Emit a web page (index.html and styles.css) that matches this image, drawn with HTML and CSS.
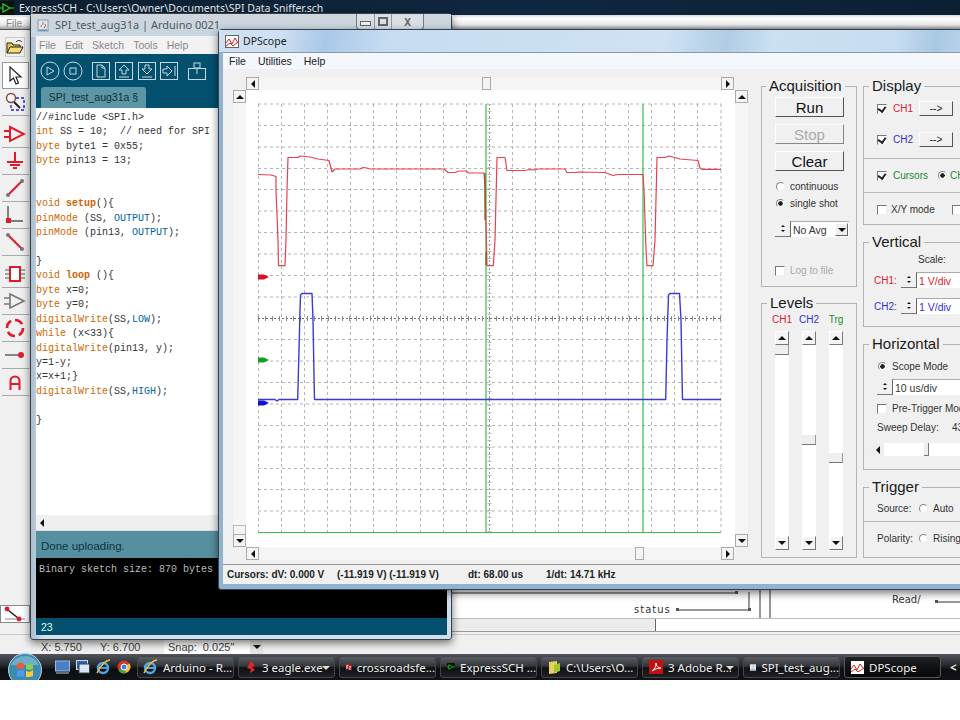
FILE: index.html
```html
<!DOCTYPE html>
<html>
<head>
    <meta charset="utf-8">
    <title>DPScope - SPI Data Sniffer</title>
    <link rel="stylesheet" href="styles.css">
</head>
<body>
<div class="screen">

    <!-- ExpressSCH, behind everything -->
    <div class="sch">
        <div class="sch-title">
            <svg class="sch-logo" width="14" height="14" viewBox="0 0 14 14"><rect width="14" height="14" fill="#0a1408"/><path d="M3 3l7 4-7 4zM0 7h3M10 7h4" fill="none" stroke="#2fd03a" stroke-width="1.2"/></svg>
            <span>ExpressSCH - C:\Users\Owner\Documents\SPI Data Sniffer.sch</span>
        </div>
        <div class="sch-menu"><span>File</span></div>
        <div class="sch-main">
            <div class="sch-tools">
                <div class="open-btn">
                    <svg width="18" height="16" viewBox="0 0 18 16"><path d="M1 14V4h5l1 2h7v2" fill="#e8c84a" stroke="#222"/><path d="M1 14l3-6h13l-3 6z" fill="#f3dc76" stroke="#222"/><path d="M10 3c2-2 4-2 6 0" fill="none" stroke="#222"/></svg>
                </div>
                <div class="tool tool-on">
                    <svg width="18" height="20" viewBox="0 0 18 20"><path d="M4 1v14l3.5-3 2.5 6 2.5-1-2.5-6H15z" fill="#fff" stroke="#222" stroke-width="1.2"/></svg>
                </div>
                <div class="tool tool-gap">
                    <svg width="22" height="20" viewBox="0 0 22 20"><rect x="7" y="6" width="13" height="12" fill="none" stroke="#2222cc" stroke-dasharray="3 2" stroke-width="1.4"/><circle cx="7" cy="6" r="4.5" fill="#f5f5f5" stroke="#884444" stroke-width="1.4"/><path d="M10 10l6 6" stroke="#222" stroke-width="2"/></svg>
                </div>
                <div class="tool">
                    <svg width="22" height="18" viewBox="0 0 22 18"><path d="M6 2l14 7-14 7zM0 6h6M0 12h6" fill="none" stroke="#e01a2a" stroke-width="2"/></svg>
                </div>
                <div class="tool">
                    <svg width="18" height="18" viewBox="0 0 18 18"><path d="M9 0v10M1 10h16M4 13h10M7 16h4" fill="none" stroke="#e01a2a" stroke-width="2"/></svg>
                </div>
                <div class="tool">
                    <svg width="20" height="20" viewBox="0 0 20 20"><path d="M3 17L17 3" stroke="#e01a2a" stroke-width="2"/><circle cx="17" cy="3" r="2" fill="#777"/><circle cx="3" cy="17" r="2" fill="#777"/></svg>
                </div>
                <div class="tool">
                    <svg width="20" height="20" viewBox="0 0 20 20"><path d="M3 1v15h15" fill="none" stroke="#555" stroke-width="1.4"/><rect x="1" y="13" width="5" height="5" fill="#e01a2a"/></svg>
                </div>
                <div class="tool tool-gap">
                    <svg width="20" height="20" viewBox="0 0 20 20"><path d="M3 3l14 14" stroke="#e01a2a" stroke-width="2"/><circle cx="3" cy="3" r="2" fill="#777"/><circle cx="17" cy="17" r="2" fill="#777"/></svg>
                </div>
                <div class="tool">
                    <svg width="22" height="20" viewBox="0 0 22 20"><rect x="6" y="3" width="10" height="14" fill="#fff" stroke="#e01a2a" stroke-width="2"/><path d="M1 6h5M1 10h5M1 14h5M16 6h5M16 10h5M16 14h5" stroke="#555"/></svg>
                </div>
                <div class="tool">
                    <svg width="22" height="18" viewBox="0 0 22 18"><path d="M6 2l14 7-14 7zM0 6h6M0 12h6" fill="none" stroke="#777" stroke-width="1.6"/></svg>
                </div>
                <div class="tool">
                    <svg width="20" height="20" viewBox="0 0 20 20"><circle cx="10" cy="10" r="8" fill="none" stroke="#e01a2a" stroke-width="2.6" stroke-dasharray="8.5 4"/></svg>
                </div>
                <div class="tool">
                    <svg width="22" height="10" viewBox="0 0 22 10"><path d="M1 5h14" stroke="#555" stroke-width="1.4"/><circle cx="17" cy="5" r="3" fill="#e01a2a"/></svg>
                </div>
                <div class="tool">
                    <svg width="12" height="15" viewBox="0 0 12 15"><path d="M1.5 15V6a4.5 4.5 0 0 1 9 0v9M1.5 9h9" fill="none" stroke="#e01a2a" stroke-width="2"/></svg>
                </div>
                <div class="tools-fill"></div>
                <div class="tool-last">
                    <svg width="26" height="16" viewBox="0 0 26 16"><path d="M3 13h20" stroke="#888"/><path d="M6 4l10 8" stroke="#222" stroke-width="1.6"/><circle cx="5" cy="3" r="2.4" fill="#e01a2a"/><circle cx="17" cy="13" r="2.4" fill="#e01a2a"/></svg>
                </div>
            </div>
            <div class="sch-canvas">
                <div class="sheet">
                    <svg class="sheet-lines" width="930" height="589" viewBox="30 30 930 589">
                        <path d="M452 593H736M678 610H749V592M760 590V618M770 590V618M936 602H960" fill="none" stroke="#333"/>
                        <rect x="676" y="608" width="3" height="3" fill="#555"/>
                        <rect x="748" y="608" width="3" height="3" fill="#555"/>
                        <rect x="735" y="591" width="3" height="3" fill="#555"/>
                        <rect x="935" y="600" width="3" height="3" fill="#555"/>
                    </svg>
                    <span class="net net-status">status</span>
                    <span class="net net-read">Read/</span>
                </div>
                <div class="sheet-scroll"><div class="sheet-thumb"></div></div>
                <div class="sheet-gap"></div>
            </div>
        </div>
        <div class="sch-status">
            <span class="coord">X: 5.750</span>
            <span class="coord">Y: 6.700</span>
            <div class="snap">Snap:&nbsp; 0.025"<span class="snap-drop"><i class="arr arr-down"></i></span></div>
        </div>
    </div>

    <!-- Arduino IDE -->
    <div class="win ard">
        <div class="ard-title">
            <svg width="12" height="13" viewBox="0 0 12 13"><rect x="1" y="1" width="10" height="11" fill="#dfe8f2" stroke="#8899aa"/><path d="M4 8c0-3 3-2 2-5M7 9c1-2 2-2 1-4" fill="none" stroke="#c8541e"/><path d="M2 11h8" stroke="#3a6ea5"/></svg>
            <span class="ard-name">SPI_test_aug31a | Arduino 0021</span>
            <div class="win-btns">
                <span class="wb wb-min"><i></i></span>
                <span class="wb wb-max"><i></i></span>
                <span class="wb wb-close">X</span>
            </div>
        </div>
        <div class="ard-menu">
            <span>File</span><span>Edit</span><span>Sketch</span><span>Tools</span><span>Help</span>
        </div>
        <div class="ard-head">
            <div class="ard-icons">
                <svg width="20" height="20" viewBox="0 0 20 20"><circle cx="10" cy="10" r="9" class="ico"/><path d="M7 6l7 4-7 4z" class="ico"/></svg>
                <svg class="ico-second" width="20" height="20" viewBox="0 0 20 20"><circle cx="10" cy="10" r="9" class="ico"/><rect x="7" y="7" width="6" height="6" class="ico"/></svg>
                <svg class="ico-first" width="18" height="18" viewBox="0 0 18 18"><rect x="0.5" y="0.5" width="17" height="17" class="ico"/><path d="M5 3h5l3 3v9H5zM10 3v3h3" class="ico"/></svg>
                <svg width="18" height="18" viewBox="0 0 18 18"><rect x="0.5" y="0.5" width="17" height="17" class="ico"/><path d="M9 3l5 5h-3v4H7V8H4zM4 15h10" class="ico"/></svg>
                <svg width="18" height="18" viewBox="0 0 18 18"><rect x="0.5" y="0.5" width="17" height="17" class="ico"/><path d="M9 12l5-5h-3V3H7v4H4zM4 15h10" class="ico"/></svg>
                <svg class="ico-tight" width="18" height="18" viewBox="0 0 18 18"><rect x="0.5" y="0.5" width="17" height="17" class="ico"/><path d="M12 9L7 4v3H3v4h4v3zM15 4v10" class="ico"/></svg>
                <svg class="ico-last" width="18" height="18" viewBox="0 0 18 18"><rect x="0.5" y="6.5" width="17" height="11" class="ico"/><rect x="6" y="1" width="6" height="5" class="ico"/><path d="M9 6v6" class="ico"/></svg>
            </div>
            <div class="ard-tab">SPI_test_aug31a §</div>
        </div>
<pre class="code">//#include &lt;SPI.h&gt;
<b>int</b> SS = 10;  // need for SPI
<b>byte</b> byte1 = 0x55;
<b>byte</b> pin13 = 13;


<b>void</b> <strong>setup</strong>(){
<b>pinMode</b> (SS, <em>OUTPUT</em>);
<b>pinMode</b> (pin13, <em>OUTPUT</em>);

}
<b>void</b> <strong>loop</strong> (){
<b>byte</b> x=0;
<b>byte</b> y=0;
<b>digitalWrite</b>(SS,<em>LOW</em>);
<b>while</b> (x&lt;33){
<b>digitalWrite</b>(pin13, y);
y=1-y;
x=x+1;}
<b>digitalWrite</b>(SS,<em>HIGH</em>);

}</pre>
        <div class="ard-scroll"><span class="ard-left"><i class="arr arr-left"></i></span></div>
        <div class="ard-status">Done uploading.</div>
        <pre class="ard-console">Binary sketch size: 870 bytes</pre>
        <div class="ard-foot">23</div>
    </div>

    <!-- DPScope -->
    <div class="win dps">
        <div class="dps-title">
            <svg width="14" height="13" viewBox="0 0 14 13"><rect x="0.5" y="0.5" width="13" height="12" fill="#fff" stroke="#666"/><path d="M1 8l3-4 3 5 3-6 3 5M1 11l4-3 3 3 5-4" fill="none" stroke="#c22"/></svg>
            <span>DPScope</span>
        </div>
        <div class="dps-menu"><span>File</span><span>Utilities</span><span>Help</span></div>
        <div class="dps-client">
            <div class="view">
                <div class="corner"></div>
                <div class="hbar">
                    <span class="sb"><i class="arr arr-left"></i></span>
                    <span class="h-thumb h-thumb-top"></span>
                    <span class="sb sb-end"><i class="arr arr-right"></i></span>
                </div>
                <div class="corner"></div>

                <div class="vbar">
                    <span class="sb"><i class="arr arr-up"></i></span>
                    <span class="v-thumb"></span>
                    <span class="sb"><i class="arr arr-down"></i></span>
                </div>
                <svg class="plot" width="489" height="457" viewBox="246 90 489 457">
                    <!-- grid -->
                    <path class="grid" d="M258 104H721M258 125.5H721M258 147H721M258 168.5H721M258 189.5H721M258 211H721M258 232.5H721M258 254H721M258 275.5H721M258 297H721M258 339.5H721M258 361H721M258 382.5H721M258 404H721M258 425.5H721M258 447H721M258 468.5H721M258 489.5H721M258 511H721"/>
                    <path class="grid" d="M258.5 104V532M281.5 104V532M304.5 104V532M327.5 104V532M350.5 104V532M373.5 104V532M396.5 104V532M420.5 104V532M443.5 104V532M466.5 104V532M512.5 104V532M535.5 104V532M558.5 104V532M582.5 104V532M605.5 104V532M628.5 104V532M651.5 104V532M674.5 104V532M697.5 104V532M721 104V532"/>
                    <path class="axis" d="M258 318.5H721"/>
                    <path class="axis-v" d="M489.5 104V532"/>
                    <path class="ticks" d="M258 318.5H721"/>
                    <path class="ticks-v" d="M489.5 104V532"/>
                    <!-- cursors and baseline -->
                    <path class="cursor" d="M486 104V532M643 104V532M258 532.5H721"/>
                    <!-- traces -->
                    <polyline class="tr-red" points="258,174.5 271,175 276,176.5 276,190 278,240 278.5,265.7 285,265.7 286,240 287,190 288,157.5 298,157.5 300,156 310,157 318,159 329,160.5 331,168 332,172 335,169 360,169 363,167.5 367,168 370,169 444,169 448,172.5 455,172.5 459,171 466,171 469,173 484,173 485,186 487,265.7 493.3,265.7 495,240 497,157.5 505,157.5 507,170.5 524,170.5 530,169.5 534,170 538,169 565,169 567,172.5 576,172.5 578,172 605,172.5 613,175.5 618,174.5 643,174.5 644,190 646,250 647,265.7 653,265.7 655,240 657,157.5 665,157.5 669,156 680,159 698,160.5 700,168 702,169.3 721,169.3"/>
                    <path class="tr-brown" d="M485 173V220M486 252V265"/>
                    <polyline class="tr-blue" points="258,399.5 275,399.5 277,401 279,399.5 297.7,399.5 299,350 300,310 300.5,295 302,293.5 312,293.5 313,320 314,375 314.5,399.5 665.7,399.5 667,340 668,310 668.5,295 670,293.5 679.5,293.5 681,320 682,375 682.5,399.5 721,399.5"/>
                    <!-- channel markers -->
                    <path d="M258 274.5h6l5 2.5-5 2.5h-6z" fill="#e01020"/>
                    <path d="M258 357.5h6l5 2.5-5 2.5h-6z" fill="#10a020"/>
                    <path d="M258 400.5h6l5 2.5-5 2.5h-6z" fill="#1010d8"/>
                </svg>
                <div class="vbar">
                    <span class="sb"><i class="arr arr-up"></i></span>
                    <span class="v-fill"></span>
                    <span class="sb"><i class="arr arr-down"></i></span>
                </div>

                <div class="corner"></div>
                <div class="hbar">
                    <span class="sb"><i class="arr arr-left"></i></span>
                    <span class="h-thumb h-thumb-bot"></span>
                    <span class="sb sb-end"><i class="arr arr-right"></i></span>
                </div>
                <div class="corner"></div>
            </div>

            <div class="col col-a">
                <fieldset class="acq">
                    <legend>Acquisition</legend>
                    <button class="big">Run</button>
                    <button class="big off">Stop</button>
                    <button class="big">Clear</button>
                    <label class="opt opt-first"><i class="radio"></i>continuous</label>
                    <label class="opt"><i class="radio on"></i>single shot</label>
                    <div class="stepper avg">
                        <span class="spin"><i class="arr arr-up"></i><i class="arr arr-down"></i></span>
                        <span class="field">No Avg<span class="drop"><i class="arr arr-down"></i></span></span>
                    </div>
                    <label class="opt off log"><i class="check"></i>Log to file</label>
                </fieldset>
                <fieldset class="levels">
                    <legend>Levels</legend>
                    <div class="lev-grid">
                        <span class="red">CH1</span><span class="blue">CH2</span><span class="green">Trg</span>
                        <div class="lev"><span class="sb"><i class="arr arr-up"></i></span><span class="lev-track"><span class="lev-thumb lt1"></span></span><span class="sb"><i class="arr arr-down"></i></span></div>
                        <div class="lev"><span class="sb"><i class="arr arr-up"></i></span><span class="lev-track"><span class="lev-thumb lt2"></span></span><span class="sb"><i class="arr arr-down"></i></span></div>
                        <div class="lev"><span class="sb"><i class="arr arr-up"></i></span><span class="lev-track"><span class="lev-thumb lt3"></span></span><span class="sb"><i class="arr arr-down"></i></span></div>
                    </div>
                </fieldset>
            </div>

            <div class="col col-b">
                <fieldset class="display">
                    <legend>Display</legend>
                    <div class="row row-ch"><i class="check on"></i><span class="red ch">CH1</span><button class="mini">--&gt;</button></div>
                    <div class="row row-ch2"><i class="check on"></i><span class="blue ch">CH2</span><button class="mini">--&gt;</button></div>
                    <hr>
                    <div class="row row-cur"><i class="check on"></i><span class="green ch cur">Cursors</span><i class="radio on"></i><span class="green">CH1</span></div>
                    <hr>
                    <div class="row row-xy"><i class="check"></i><span class="xy">X/Y mode</span><i class="check"></i></div>
                </fieldset>
                <fieldset class="vertical">
                    <legend>Vertical</legend>
                    <div class="scale">Scale:</div>
                    <div class="row row-v"><span class="red vlab">CH1:</span><div class="stepper wide"><span class="spin"><i class="arr arr-up"></i><i class="arr arr-down"></i></span><span class="field red">1 V/div</span></div></div>
                    <div class="row row-v row-v2"><span class="blue vlab">CH2:</span><div class="stepper wide"><span class="spin"><i class="arr arr-up"></i><i class="arr arr-down"></i></span><span class="field blue">1 V/div</span></div></div>
                </fieldset>
                <fieldset class="horizontal">
                    <legend>Horizontal</legend>
                    <div class="row row-sm"><i class="radio on"></i><span>Scope Mode</span></div>
                    <div class="stepper wide sweep"><span class="spin"><i class="arr arr-up"></i><i class="arr arr-down"></i></span><span class="field">10 us/div</span></div>
                    <div class="row row-pre"><i class="check"></i><span>Pre-Trigger Mode</span></div>
                    <div class="row row-delay"><span>Sweep Delay:</span><span class="delay">43</span></div>
                    <div class="h-slider"><span class="sb"><i class="arr arr-left"></i></span><span class="h-track"><span class="slide"></span></span></div>
                </fieldset>
                <fieldset class="trigger">
                    <legend>Trigger</legend>
                    <div class="row row-src"><span class="trig-lab">Source:</span><i class="radio"></i><span>Auto</span></div>
                    <hr>
                    <div class="row row-pol"><span class="trig-lab">Polarity:</span><i class="radio"></i><span>Rising</span></div>
                </fieldset>
            </div>
        </div>
        <div class="dps-status">
            <span class="st-a">Cursors: dV: 0.000 V</span>
            <span class="st-b">(-11.919 V) (-11.919 V)</span>
            <span class="st-c">dt: 68.00 us</span>
            <span class="st-d">1/dt: 14.71 kHz</span>
        </div>
    </div>

    <!-- Vista taskbar -->
    <div class="taskbar">
        <div class="orb">
            <svg width="34" height="34" viewBox="0 0 34 34">
                <circle cx="17" cy="17" r="16.5" fill="#3f8bb0" stroke="#b4d6e6"/>
                <path d="M3 12a14.5 12 0 0 1 28 0z" fill="#9fd0e6" opacity="0.5"/>
                <path d="M9 11c3-2 5-1 7 0v5c-2-1-5-1-7 0z" fill="#ef5a30"/>
                <path d="M18 11c3 1 5 1 7-1v6c-2 1-5 1-7 0z" fill="#8cd048"/>
                <path d="M9 18c3-1 5-1 7 0v6c-2-1-5-1-7 0z" fill="#4a9cf0"/>
                <path d="M18 18c3 1 5 1 7-1v6c-2 1-5 1-7 1z" fill="#f8cc38"/>
            </svg>
        </div>
        <div class="quick">
            <svg width="15" height="14" viewBox="0 0 15 14"><rect x="0.5" y="1" width="14" height="10" fill="#4a7fc8" stroke="#9db8d8"/><path d="M1 13h13" stroke="#bcd"/></svg>
            <svg width="14" height="14" viewBox="0 0 14 14"><rect x="0.5" y="0.5" width="11" height="9" fill="#2b64b0" stroke="#cde"/><rect x="3" y="4" width="10.5" height="9" fill="#d8e6f5" stroke="#345"/></svg>
            <svg width="15" height="16" viewBox="0 0 15 16"><circle cx="7" cy="9" r="5" fill="none" stroke="#4ea5e8" stroke-width="2.4"/><path d="M3 9h8" stroke="#4ea5e8" stroke-width="1.8"/><path d="M1 14C5 5 11 1 14 1" fill="none" stroke="#f0c040" stroke-width="1.4"/></svg>
            <svg width="14" height="14" viewBox="0 0 14 14"><circle cx="7" cy="7" r="6.5" fill="#d8352a"/><path d="M7 7L1.5 10.5A6.5 6.5 0 0 0 9 13z" fill="#3aa648"/><path d="M7 7l2 6A6.5 6.5 0 0 0 12.5 3.5z" fill="#f2c22e"/><circle cx="7" cy="7" r="3" fill="#3a82e0" stroke="#fff"/></svg>
        </div>
        <div class="task task-1">
            <svg width="15" height="16" viewBox="0 0 15 16"><circle cx="7" cy="9" r="5" fill="none" stroke="#4ea5e8" stroke-width="2.4"/><path d="M3 9h8" stroke="#4ea5e8" stroke-width="1.8"/><path d="M1 14C5 5 11 1 14 1" fill="none" stroke="#f0c040" stroke-width="1.4"/></svg>
            <span>Arduino - R...</span>
        </div>
        <div class="task">
            <svg width="12" height="14" viewBox="0 0 12 14"><path d="M6 1l4 5-3 1 3 3-5 3 1-4-4-1z" fill="#e02828"/></svg>
            <span>3 eagle.exe</span><i class="task-drop"></i>
        </div>
        <div class="task">
            <svg width="14" height="14" viewBox="0 0 14 14"><rect width="14" height="14" fill="#a81818"/><path d="M2 12V3h4M2 7h3" fill="none" stroke="#fff" stroke-width="1.8"/><path d="M7 6h5l-5 6h5" fill="none" stroke="#fff" stroke-width="1.6"/></svg>
            <span>crossroadsfe...</span>
        </div>
        <div class="task">
            <svg width="14" height="14" viewBox="0 0 14 14"><rect width="14" height="14" fill="#0a1408"/><path d="M3 3l7 4-7 4zM0 7h3M10 7h4" fill="none" stroke="#2fd03a" stroke-width="1.2"/></svg>
            <span>ExpressSCH ...</span>
        </div>
        <div class="task">
            <svg width="13" height="15" viewBox="0 0 13 15"><path d="M1 2l8-1v12l-8 1z" fill="#e8d060"/><path d="M6 5l6-2v8l-6 2z" fill="#9cc830"/></svg>
            <span>C:\Users\O...</span>
        </div>
        <div class="task">
            <svg width="14" height="14" viewBox="0 0 14 14"><rect width="14" height="14" fill="#c41010"/><path d="M3 11c3-2 4-5 4-8 0 3 2 5 5 5-3 0-6 1-9 3z" fill="none" stroke="#fff"/></svg>
            <span>3 Adobe R...</span><i class="task-drop"></i>
        </div>
        <div class="task">
            <svg width="13" height="13" viewBox="0 0 13 13"><rect width="13" height="13" fill="#dfe8f2"/><path d="M5 8c0-3 3-2 2-5" fill="none" stroke="#c8541e"/><path d="M2 11h9" stroke="#3a6ea5"/></svg>
            <span>SPI_test_aug...</span>
        </div>
        <div class="task task-on">
            <svg width="13" height="13" viewBox="0 0 13 13"><rect width="13" height="13" fill="#fff"/><path d="M0 8l3-4 3 5 3-6 4 5M0 11l4-3 3 3 6-4" fill="none" stroke="#c22"/></svg>
            <span>DPScope</span>
        </div>
        <span class="task-more">&lt;</span>
    </div>
</div>
</body>
</html>
```

FILE: styles.css
```css
html, body {
    margin: 0;
    padding: 0;
    background: #fff;
}

.screen {
    position: relative;
    width: 960px;
    height: 680px;
    overflow: hidden;
    display: flex;
    flex-direction: column;
    font-family: "Liberation Sans", Arial, sans-serif;
    font-size: 10px;
    color: #333;
    background: #f0f0f0;
}

i {
    display: block;
    font-style: normal;
}

/* arrows for the scroll bars, spinners and combos */
.arr {
    width: 0;
    height: 0;
    border: 4px solid transparent;
}
.arr-up {
    border-top: 0;
    border-bottom-color: #111;
}
.arr-down {
    border-bottom: 0;
    border-top-color: #111;
}
.arr-left {
    border-left: 0;
    border-right-color: #111;
}
.arr-right {
    border-right: 0;
    border-left-color: #111;
}

/* ---- ExpressSCH ---- */
.sch {
    flex: 1;
    display: flex;
    flex-direction: column;
    min-height: 0;
}
.sch-title {
    height: 15px;
    display: flex;
    align-items: center;
    gap: 5px;
    background: linear-gradient(90deg, #0d1f30, #0f2740 55%, #0c2034);
    color: #e4e8ec;
    font-family: "Noto Sans", sans-serif;
    font-size: 10.5px;
    white-space: nowrap;
}
.sch-logo {
    flex: none;
}
.sch-menu {
    height: 15px;
    padding: 3px 6px 0;
    display: flex;
    align-items: center;
    font-size: 10px;
    color: #888;
    background: linear-gradient(#d8dadd, #fff 25%, #e8e8ea 70%, #9a9da2);
    border-bottom: 1px solid #555;
    box-sizing: border-box;
}
.sch-main {
    flex: 1;
    display: flex;
    min-height: 0;
}
.sch-tools {
    width: 30px;
    flex: none;
    display: flex;
    flex-direction: column;
    align-items: center;
    background: #f0f0f0;
    padding-top: 7px;
    box-sizing: border-box;
}
.open-btn {
    width: 20px;
    height: 20px;
    display: flex;
    align-items: center;
    justify-content: center;
    border: 1px solid #ccc;
    margin-bottom: 5px;
    box-sizing: border-box;
}
.tool {
    width: 27px;
    height: 27px;
    flex: none;
    display: flex;
    align-items: center;
    justify-content: center;
    border-bottom: 1px solid #aaa;
    box-sizing: border-box;
}
.tool-on {
    background: #fff;
    border: 1px solid #999;
}
.tool-gap {
    margin-bottom: 5px;
}
.tools-fill {
    flex: 1;
}
.tool-last {
    width: 30px;
    height: 18px;
    margin-bottom: 11px;
    display: flex;
    align-items: center;
    justify-content: center;
    background: #fff;
    border: 1px solid #888;
    box-sizing: border-box;
}
.sch-canvas {
    flex: 1;
    display: flex;
    flex-direction: column;
    min-width: 0;
}
.sheet {
    flex: 1;
    position: relative;
    background: #fff;
    overflow: hidden;
}
.sheet-lines {
    position: absolute;
    left: 0;
    top: 0;
}
.net {
    position: absolute;
    font-family: "DejaVu Sans", sans-serif;
    font-size: 10px;
    letter-spacing: 1px;
    color: #333;
}
.net-status {
    left: 604px;
    top: 574px;
}
.net-read {
    left: 862px;
    top: 564px;
    letter-spacing: 0;
}
.sheet-scroll {
    height: 14px;
    background: #fff;
    border-top: 1px solid #bbb;
    border-bottom: 1px solid #999;
    box-sizing: border-box;
}
.sheet-thumb {
    width: 625px;
    height: 12px;
    background: #ececec;
    border-right: 1px solid #666;
}
.sheet-gap {
    height: 2px;
    background: #f0f0f0;
}
.sch-status {
    height: 20px;
    flex: none;
    display: flex;
    align-items: center;
    padding: 4px 0 0 41px;
    box-sizing: border-box;
    font-size: 11px;
    color: #444;
    background: #f0f0f0;
    border-top: 1px solid #ccc;
}
.coord {
    width: 59px;
}
.snap {
    width: 99px;
    height: 14px;
    margin-left: 5px;
    padding: 1px 4px;
    display: flex;
    box-sizing: border-box;
    background: #fff;
    position: relative;
}
.snap-drop {
    position: absolute;
    right: 0;
    top: 0;
    width: 13px;
    height: 14px;
    display: flex;
    align-items: center;
    justify-content: center;
    background: #e6e6e6;
}

/* ---- windows on the desktop ---- */
.win {
    position: absolute;
    box-sizing: border-box;
    display: flex;
    flex-direction: column;
    border-radius: 4px 4px 3px 3px;
    border: 1px solid #33414d;
    box-shadow: 0 3px 9px rgba(0, 0, 0, 0.55);
}

/* ---- Arduino ---- */
.ard {
    left: 30px;
    top: 13px;
    width: 422px;
    height: 627px;
    padding: 0 4px 4px 5px;
    background: linear-gradient(90deg, #a9bdcd, #d3e1ea 3%, #cfdfea);
}
.ard-title {
    height: 23px;
    flex: none;
    display: flex;
    align-items: flex-start;
    color: #555;
    font-family: "Noto Sans", sans-serif;
    font-size: 11px;
    background: linear-gradient(#cfd5db, #c6d6e2);
    margin: 0 -4px 0 -5px;
    padding: 0 4px 0 6px;
}
.ard-title svg {
    margin-top: 5px;
}
.ard-name {
    margin: 3px 0 0 6px;
}
.win-btns {
    margin-left: auto;
    margin-right: 23px;
    width: 68px;
    height: 16px;
    display: flex;
    align-items: center;
    box-sizing: border-box;
    border: 1px solid #778;
    border-top: 0;
    border-radius: 0 0 4px 4px;
    background: rgba(255, 255, 255, 0.25);
}
.wb {
    height: 15px;
    display: flex;
    align-items: center;
    justify-content: center;
    color: #666;
    font-size: 10px;
    font-weight: bold;
}
.wb-min {
    width: 17px;
    border-right: 1px solid #999;
}
.wb-min i {
    width: 9px;
    height: 3px;
    margin-top: 3px;
    border: 1px solid #666;
    background: #eee;
}
.wb-max {
    width: 16px;
    border-right: 1px solid #999;
}
.wb-max i {
    width: 6px;
    height: 5px;
    border: 2px solid #666;
}
.wb-close {
    flex: 1;
}
.ard-menu {
    height: 18px;
    flex: none;
    display: flex;
    align-items: center;
    gap: 9px;
    padding: 0 3px;
    margin-top: -1px;
    font-size: 10.5px;
    color: #888;
    background: #f2f2f2;
}
.ard-head {
    height: 54px;
    flex: none;
    background: #04506f;
    display: flex;
    flex-direction: column;
}
.ard-icons {
    height: 33px;
    display: flex;
    align-items: center;
    gap: 5px;
    padding-left: 4px;
}
.ard-icons .ico-second {
    margin-left: -2px;
}
.ard-icons .ico-first {
    margin-left: 4px;
}
.ard-icons .ico-tight {
    margin-left: -1px;
}
.ard-icons .ico-last {
    margin-left: 5px;
}
.ico {
    fill: none;
    stroke: #c3d8e2;
}
.ard-tab {
    width: 105px;
    height: 21px;
    margin-left: 5px;
    line-height: 21px;
    text-align: center;
    font-size: 10.5px;
    color: #10303c;
    background: #5c95a4;
    border-radius: 3px 3px 0 0;
}
.code {
    flex: 1;
    margin: 0;
    padding: 3px 0 0 0;
    overflow: hidden;
    font-family: "Liberation Mono", monospace;
    font-size: 10px;
    line-height: 14.4px;
    color: #333;
    background: #fff;
}
.code b {
    font-weight: normal;
    color: #cc6600;
}
.code strong {
    font-weight: bold;
    color: #cc6600;
}
.code em {
    font-style: normal;
    color: #006699;
}
.ard-scroll {
    height: 15px;
    flex: none;
    background: #efefef;
}
.ard-left {
    width: 12px;
    height: 15px;
    display: flex;
    align-items: center;
    justify-content: center;
}
.ard-status {
    height: 28px;
    flex: none;
    line-height: 31px;
    padding-left: 5px;
    font-size: 11.5px;
    color: #0c3645;
    background: #568f9f;
    border-top: 1px solid #dde;
    box-sizing: border-box;
}
.ard-console {
    height: 60px;
    flex: none;
    margin: 0;
    padding: 6px 0 0 3px;
    box-sizing: border-box;
    font-family: "Liberation Mono", monospace;
    font-size: 10px;
    color: #bbb;
    background: #000;
}
.ard-foot {
    height: 17px;
    flex: none;
    line-height: 19px;
    padding-left: 5px;
    font-size: 10.5px;
    color: #dfe;
    background: #04506f;
}

/* ---- DPScope ---- */
.dps {
    left: 218px;
    top: 29px;
    width: 770px;
    height: 561px;
    padding: 0 0 5px 4px;
    background: #8fb3d0;
}
.dps-title {
    height: 22px;
    flex: none;
    display: flex;
    align-items: center;
    gap: 4px;
    font-family: "Noto Sans", sans-serif;
    font-size: 10.5px;
    color: #222;
    background: linear-gradient(102deg, #cfe0f2 0 8%, #a9c8e8 14%, #c6dcf0 22%, #cfe2f4 58%, #b0cce4 66%, #cbe0f2 72%, #c7dcf0 88%, #a8c8e2 93%, #c4dcf0);
    margin-left: -4px;
    padding-left: 6px;
}
.dps-menu {
    height: 17px;
    flex: none;
    display: flex;
    align-items: center;
    gap: 12px;
    padding-left: 6px;
    font-size: 10.5px;
    color: #222;
    background: #f4f7fb;
    border-top: 1px solid #8a98a8;
    box-sizing: border-box;
}
.dps-client {
    flex: 1;
    display: flex;
    gap: 13px;
    padding: 8px 0 0 10px;
    background: #f0f0f0;
    min-height: 0;
}
.view {
    flex: none;
    display: grid;
    grid-template-columns: 13px 489px 13px;
    grid-template-rows: 13px 457px 13px;
}
.corner {
    background: transparent;
}
.plot {
    display: block;
    background: #fff;
}
.grid {
    fill: none;
    stroke: #b4b4b4;
    stroke-dasharray: 3 3;
}
.axis {
    fill: none;
    stroke: #666;
    stroke-dasharray: 2 2;
}
.axis-v {
    fill: none;
    stroke: #999;
    stroke-dasharray: 2 2;
}
.ticks {
    fill: none;
    stroke: #888;
    stroke-width: 5;
    stroke-dasharray: 1 6;
}
.ticks-v {
    fill: none;
    stroke: #bbb;
    stroke-width: 4;
    stroke-dasharray: 1 6;
}
.cursor {
    fill: none;
    stroke: #38c048;
    stroke-width: 1.2;
}
.tr-red, .tr-blue, .tr-brown {
    fill: none;
    stroke-linejoin: round;
}
.tr-red {
    stroke: #e8404c;
    stroke-width: 1.2;
}
.tr-brown {
    stroke: #7a5a10;
    stroke-width: 1.2;
}
.tr-blue {
    stroke: #3a3ad8;
    stroke-width: 1.4;
}

.sb {
    width: 13px;
    height: 13px;
    flex: none;
    display: flex;
    align-items: center;
    justify-content: center;
    box-sizing: border-box;
    border: 1px solid #aaa;
    background: #f4f4f4;
}
.hbar {
    display: flex;
    align-items: stretch;
    justify-content: space-between;
    background: #f5f5f5;
    position: relative;
}
.sb-end {
    margin-right: 1px;
}
.h-thumb {
    position: absolute;
    top: 0;
    width: 9px;
    height: 13px;
    box-sizing: border-box;
    border: 1px solid #aaa;
    background: #f4f4f4;
}
.h-thumb-top {
    left: 236px;
}
.h-thumb-bot {
    left: 389px;
}
.vbar {
    display: flex;
    flex-direction: column;
    background: #f5f5f5;
}
.v-thumb {
    height: 9px;
    margin-top: auto;
    box-sizing: border-box;
    border: 1px solid #bbb;
    border-bottom: 0;
    background: #f4f4f4;
}
.v-fill {
    flex: 1;
}

.col {
    flex: none;
    display: flex;
    flex-direction: column;
}
.col-a {
    width: 96px;
    gap: 7px;
    margin-right: -7px;
}
.col-b {
    width: 150px;
    gap: 8px;
}
fieldset {
    margin: 0;
    padding: 2px 0 0;
    box-sizing: border-box;
    border: 1px solid #b4b4b4;
    min-width: 0;
}
legend {
    margin-left: 5px;
    padding: 0 3px;
    font-size: 15px;
    line-height: 18px;
    color: #1a1a1a;
}
hr {
    margin: 0;
    border: 0;
    border-top: 1px solid #bbb;
}
.red {
    color: #d82030;
}
.blue {
    color: #3030d0;
}
.green {
    color: #208a30;
}

/* acquisition */
.acq {
    height: 210px;
    padding-left: 13px;
}
.acq legend {
    margin-left: -9px;
}
button {
    display: block;
    font-family: inherit;
    padding: 0;
    background: #f0f0f0;
    color: #111;
    border: 1px solid;
    border-color: #fff #555 #555 #fff;
}
.big {
    width: 69px;
    height: 20px;
    margin-bottom: 7px;
    font-size: 15px;
    line-height: 17px;
}
.big.off {
    color: #aaa;
    border-color: #fff #888 #888 #fff;
}
.opt {
    display: flex;
    align-items: center;
    gap: 5px;
    height: 17px;
    font-size: 10px;
}
.opt-first {
    margin-top: 1px;
}
.opt.off {
    color: #aaa;
}
.radio {
    width: 9px;
    height: 9px;
    flex: none;
    box-sizing: border-box;
    border-radius: 50%;
    border: 1px solid;
    border-color: #888 #eee #eee #888;
    background: #fff;
    margin-left: 1px;
}
.radio.on {
    background: radial-gradient(circle, #222 0 2px, #fff 2.5px);
}
.check {
    width: 10px;
    height: 10px;
    flex: none;
    box-sizing: border-box;
    border: 1px solid;
    border-color: #777 #eee #eee #777;
    background: #fff;
    position: relative;
}
.check.on::after {
    content: "";
    position: absolute;
    left: 1px;
    top: 0;
    width: 4px;
    height: 5px;
    border: solid #222;
    border-width: 0 2px 2px 0;
    transform: rotate(35deg);
}
.stepper {
    display: flex;
    height: 16px;
}
.spin {
    width: 15px;
    flex: none;
    display: flex;
    flex-direction: column;
    align-items: center;
    justify-content: center;
    gap: 3px;
    border-bottom: 1px solid #777;
}
.spin .arr {
    border-width: 2px;
}
.field {
    flex: 1;
    display: flex;
    align-items: center;
    padding-left: 2px;
    background: #fff;
    border-left: 1px solid #666;
    border-top: 1px solid #aaa;
    white-space: nowrap;
    font-size: 10.5px;
    position: relative;
}
.avg {
    width: 74px;
    margin-top: 9px;
}
.drop {
    position: absolute;
    right: 1px;
    top: 1px;
    width: 13px;
    height: 13px;
    display: flex;
    align-items: center;
    justify-content: center;
    background: #eee;
    border: 1px solid;
    border-color: #fff #666 #666 #fff;
    box-sizing: border-box;
}
.log {
    margin-top: 25px;
}

/* levels */
.levels {
    height: 264px;
}
.lev-grid {
    display: grid;
    grid-template-columns: repeat(3, 14px);
    column-gap: 13px;
    grid-template-rows: 12px 219px;
    row-gap: 5px;
    padding-left: 13px;
    justify-items: center;
    font-size: 10px;
}
.lev {
    display: flex;
    flex-direction: column;
    width: 14px;
}
.lev .sb {
    width: 14px;
    height: 14px;
    border: 1px solid;
    border-color: #fff #777 #777 #fff;
}
.lev-track {
    flex: 1;
    background: #fff;
    position: relative;
}
.lev-thumb {
    position: absolute;
    left: 0;
    width: 14px;
    height: 10px;
    box-sizing: border-box;
    background: #eee;
    border-bottom: 1px solid #777;
    border-right: 1px solid #999;
}
.lt1 {
    top: 0;
}
.lt2 {
    top: 90px;
}
.lt3 {
    top: 108px;
}

/* right hand column */
.row {
    display: flex;
    align-items: center;
    white-space: nowrap;
    font-size: 10px;
}
.display {
    height: 148px;
}
.ch {
    margin-left: 6px;
    width: 26px;
}
.cur {
    width: 44px;
}
.mini {
    width: 34px;
    height: 15px;
    font-size: 10px;
}
.row-ch {
    padding: 4px 0 0 13px;
}
.row-ch2 {
    padding: 16px 0 11px 13px;
}
.row-cur {
    padding: 11px 0 11px 13px;
}
.row-cur .green:last-child {
    margin-left: 3px;
}
.row-xy {
    padding: 11px 0 0 13px;
}
.xy {
    margin-left: 4px;
    width: 61px;
}
.vertical {
    height: 94px;
}
.scale {
    padding: 1px 0 7px 54px;
}
.row-v {
    padding-left: 10px;
}
.row-v2 {
    padding-top: 10px;
}
.vlab {
    width: 27px;
}
.wide {
    width: 100px;
}
.horizontal {
    height: 135px;
}
.row-sm {
    padding: 6px 0 0 13px;
    gap: 5px;
}
.sweep {
    margin: 7px 0 0 13px;
}
.row-pre {
    padding: 8px 0 0 13px;
    gap: 5px;
}
.row-delay {
    padding: 8px 0 0 13px;
}
.delay {
    margin-left: 16px;
}
.row-delay span:first-child {
    width: 59px;
}
.h-slider {
    display: flex;
    margin: 10px 0 0 7px;
    height: 13px;
}
.h-slider .sb {
    border: 0;
    background: #eee;
}
.h-track {
    flex: 1;
    background: #fff;
    position: relative;
}
.slide {
    position: absolute;
    left: 40px;
    top: 0;
    width: 4px;
    height: 12px;
    background: #eee;
    border-right: 1px solid #777;
    border-bottom: 1px solid #777;
}
.trigger {
    height: 80px;
}
.trig-lab {
    width: 40px;
    padding-left: 13px;
}
.trigger .radio {
    margin: 0 5px 0 2px;
}
.row-src {
    padding: 5px 0 7px;
}
.row-pol {
    padding: 11px 0 0;
}
.dps-status {
    height: 20px;
    flex: none;
    display: flex;
    align-items: center;
    padding-left: 4px;
    font-size: 10px;
    font-weight: bold;
    color: #222;
    white-space: nowrap;
    background: #f0f0f0;
    border-top: 1px solid #999;
    box-sizing: border-box;
}
.st-a {
    width: 110px;
}
.st-b {
    width: 131px;
}
.st-c {
    width: 78px;
}

/* ---- taskbar ---- */
.taskbar {
    height: 26px;
    flex: none;
    display: flex;
    align-items: center;
    position: relative;
    padding-left: 8px;
    background: linear-gradient(#50555c, #2a2d31 40%, #0d0e10 60%, #101216);
    font-family: "Noto Sans", sans-serif;
    font-size: 11.5px;
    color: #eee;
}
.orb {
    width: 34px;
    height: 34px;
    flex: none;
    margin: -2px 0 -8px;
}
.quick {
    display: flex;
    align-items: center;
    gap: 6px;
    margin: 0 6px 0 13px;
}
.task {
    width: 97px;
    height: 22px;
    flex: none;
    display: flex;
    align-items: center;
    gap: 5px;
    margin-right: 4px;
    padding-left: 6px;
    box-sizing: border-box;
    white-space: nowrap;
    overflow: hidden;
    position: relative;
    border: 1px solid #43474c;
    border-radius: 3px;
    background: linear-gradient(#5a5e64, #33363a 45%, #101113 55%, #1e2023);
}
.task-1 {
    padding-left: 5px;
}
.task-on {
    background: linear-gradient(#202226, #101113 50%, #08090a);
    border-color: #55595e;
}
.task-drop {
    position: absolute;
    right: 4px;
    top: 9px;
    width: 0;
    height: 0;
    border: 4px solid transparent;
    border-bottom: 0;
    border-top-color: #ddd;
}
.task-more {
    margin-left: 5px;
    font-weight: bold;
}
```
